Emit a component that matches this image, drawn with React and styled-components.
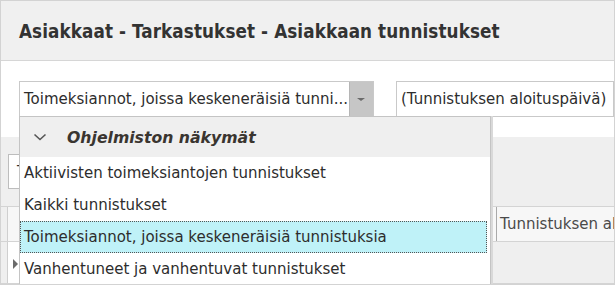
import React from 'react';
import styled, { createGlobalStyle } from 'styled-components';

const Global = createGlobalStyle`
  html, body {
    margin: 0;
    padding: 0;
    background: #fff;
  }
  body {
    font-family: "DejaVu Sans", sans-serif;
    color: #2d2d2d;
  }
`;

const Frame = styled.div`
  width: 615px;
  height: 285px;
  box-sizing: border-box;
  border: 1px solid #d3d3d3;
  overflow: hidden;
  display: flex;
  flex-direction: column;
  background: #fff;
`;

const Header = styled.div`
  height: 60px;
  flex: none;
  background: #f0f0f0;
  border-bottom: 1px solid #d6d6d6;
  display: flex;
  align-items: center;
  padding-left: 18px;
  padding-top: 2px;
  box-sizing: border-box;
`;

const Title = styled.h1`
  margin: 0;
  font-family: "DejaVu Sans Condensed", "DejaVu Sans", sans-serif;
  font-size: 18.7px;
  font-weight: bold;
  color: #333;
  letter-spacing: 0.1px;
`;

const Body = styled.div`
  position: relative;
  flex: 1;
  display: flex;
  flex-direction: column;
`;

const FilterBar = styled.div`
  display: flex;
  gap: 22px;
  padding: 20px 0 20px 18px;
`;

const Combo = styled.div`
  display: flex;
  align-items: stretch;
  height: 36px;
  box-sizing: border-box;
  border: 1px solid #c9c9c9;
  background: #fff;
  width: ${p => p.$width}px;
`;

const ComboText = styled.div`
  flex: 1;
  display: flex;
  align-items: center;
  padding-left: 4px;
  font-size: 15px;
  white-space: nowrap;
  overflow: hidden;
`;

const ComboButton = styled.div`
  width: 23px;
  flex: none;
  background: #c6c6c6;
  border-left: 1px solid #b5b5b5;
  display: flex;
  align-items: center;
  justify-content: center;

  &::after {
    content: '';
    border-left: 4px solid transparent;
    border-right: 4px solid transparent;
    border-top: 3px solid #6a6a6a;
  }
`;

const Grid = styled.div`
  flex: 1;
  background: #efefef;
  display: flex;
  flex-direction: column;
`;

const FindPanel = styled.div`
  height: 69px;
  padding: 17px 0 0 7px;
  box-sizing: border-box;
`;

const FindBox = styled.div`
  width: 400px;
  height: 35px;
  box-sizing: border-box;
  border: 1px solid #bdbdbd;
  background: #fff;
  font-size: 15px;
  padding: 8px 8px;
`;

const HeaderRow = styled.div`
  display: flex;
  height: 36px;
  box-sizing: border-box;
  border-top: 1px solid #d4d4d4;
  border-bottom: 1px solid #d4d4d4;
  padding-left: 6px;
`;

const Indicator = styled.div`
  width: 12px;
  flex: none;
  border-left: 1px solid #cfcfcf;
  background: ${p => (p.$white ? '#fff' : '#f7f7f7')};
  display: flex;
  align-items: center;
  justify-content: center;
`;

const Arrow = styled.div`
  border-top: 5px solid transparent;
  border-bottom: 5px solid transparent;
  border-left: 5px solid #6b6b6b;
  margin-left: 2px;
  margin-top: 2px;
`;

const HeaderCell = styled.div`
  width: ${p => p.$width}px;
  flex: none;
  background: #f7f7f7;
  border-left: 1px solid ${p => (p.$dark ? '#a9a9a9' : '#d4d4d4')};
  font-size: 15px;
  color: #4a4a4a;
  display: flex;
  align-items: center;
  padding-left: 3px;
  white-space: nowrap;
  overflow: hidden;
`;

const DataRow = styled.div`
  display: flex;
  height: 41px;
  padding-left: 6px;
  border-bottom: 1px solid #d4d4d4;
`;

const Popup = styled.div`
  position: absolute;
  top: 55px;
  left: 18px;
  width: 472px;
  height: 180px;
  box-sizing: border-box;
  background: #fff;
  border: 1px solid #c4c4c4;
  box-shadow: 2px 0 0 #d9d9d9;
  display: flex;
  flex-direction: column;
`;

const GroupHeader = styled.div`
  height: 40px;
  flex: none;
  background: #efefef;
  display: flex;
  align-items: center;
  gap: 20px;
  padding-left: 13px;
  font-weight: bold;
  font-style: italic;
  font-size: 15.7px;
  color: #3a3530;
`;

const Item = styled.div`
  height: 32px;
  flex: none;
  box-sizing: border-box;
  display: flex;
  align-items: center;
  padding-left: 3px;
  font-size: 15px;
  white-space: nowrap;
  margin-right: 3px;
  border: 1px ${p => (p.$selected ? 'dotted #555' : 'solid transparent')};
  background: ${p => (p.$selected ? '#bff2f8' : 'transparent')};
`;

const Chevron = () => (
  <svg width="14" height="10" viewBox="0 0 14 10">
    <polyline points="1.5,2.5 7,7.5 12.5,2.5" fill="none" stroke="#555" strokeWidth="1.6" />
  </svg>
);

const items = [
  'Aktiivisten toimeksiantojen tunnistukset',
  'Kaikki tunnistukset',
  'Toimeksiannot, joissa keskeneräisiä tunnistuksia',
  'Vanhentuneet ja vanhentuvat tunnistukset',
];

export default function App() {
  return (
    <>
      <Global />
      <Frame>
        <Header>
          <Title>Asiakkaat - Tarkastukset - Asiakkaan tunnistukset</Title>
        </Header>
        <Body>
          <FilterBar>
            <Combo $width={358}>
              <ComboText>Toimeksiannot, joissa keskeneräisiä tunni...</ComboText>
              <ComboButton />
            </Combo>
            <Combo $width={220}>
              <ComboText>(Tunnistuksen aloituspäivä)</ComboText>
            </Combo>
          </FilterBar>
          <Grid>
            <FindPanel>
              <FindBox>T</FindBox>
            </FindPanel>
            <HeaderRow>
              <Indicator />
              <HeaderCell $width={472} />
              <HeaderCell $width={130} $dark>Tunnistuksen aloituspäivä</HeaderCell>
            </HeaderRow>
            <DataRow>
              <Indicator $white>
                <Arrow />
              </Indicator>
            </DataRow>
          </Grid>
          <Popup>
            <GroupHeader>
              <Chevron />
              Ohjelmiston näkymät
            </GroupHeader>
            {items.map(text => (
              <Item key={text} $selected={text.startsWith('Toimeksiannot')}>
                {text}
              </Item>
            ))}
          </Popup>
        </Body>
      </Frame>
    </>
  );
}
